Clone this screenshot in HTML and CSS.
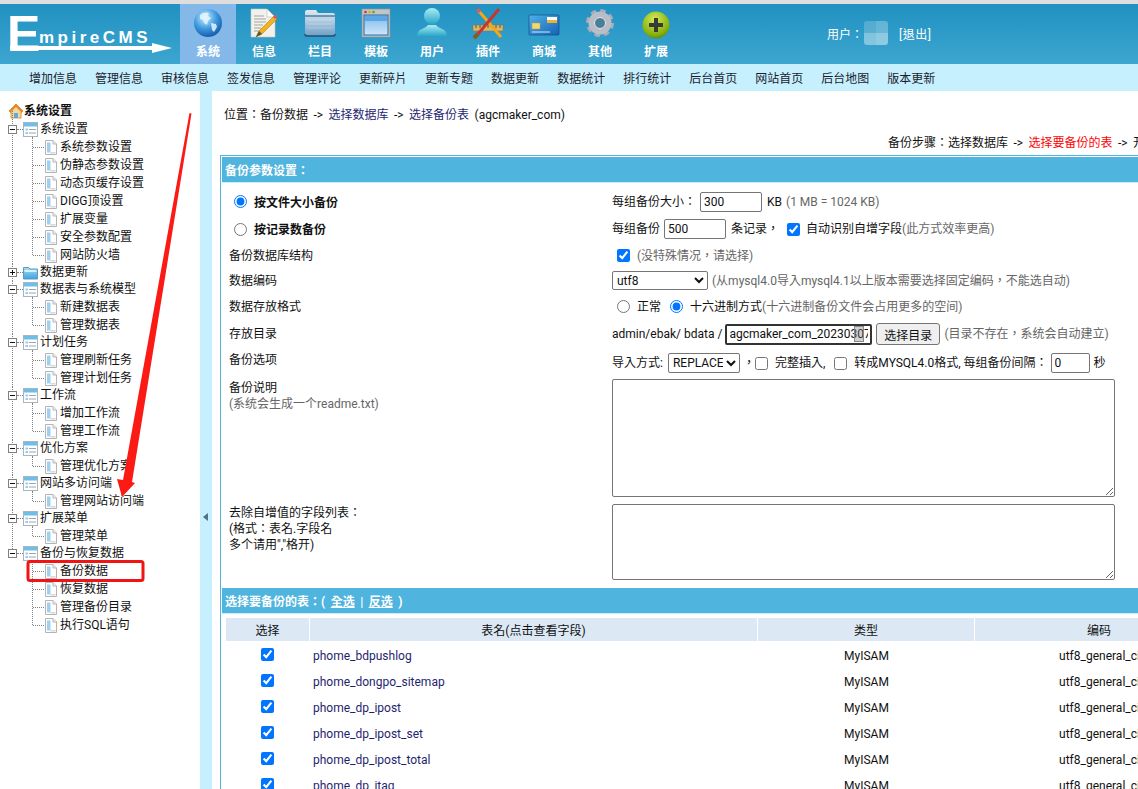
FILE: index.html
```html
<!DOCTYPE html>
<html>
<head>
<meta charset="utf-8">
<title>EmpireCMS</title>
<link rel="stylesheet" href="styles.css">
</head>
<body>
<svg class="defs" aria-hidden="true">
  <defs>
    <radialGradient id="gGlobe" cx=".4" cy=".3" r=".8"><stop offset="0" stop-color="#cfeeff"/><stop offset=".5" stop-color="#3f9be0"/><stop offset="1" stop-color="#0b4a9c"/></radialGradient>
    <linearGradient id="gFolder" x1="0" y1="0" x2="0" y2="1"><stop offset="0" stop-color="#dfeaf2"/><stop offset="1" stop-color="#6f9fc6"/></linearGradient>
    <linearGradient id="gWin" x1="0" y1="0" x2="0" y2="1"><stop offset="0" stop-color="#7db9ec"/><stop offset="1" stop-color="#cfe6fa"/></linearGradient>
    <linearGradient id="gUser" x1="0" y1="0" x2="0" y2="1"><stop offset="0" stop-color="#a8ecf5"/><stop offset="1" stop-color="#2ba6c9"/></linearGradient>
    <linearGradient id="gCard" x1="0" y1="0" x2="1" y2="1"><stop offset="0" stop-color="#4db2ea"/><stop offset="1" stop-color="#1562b4"/></linearGradient>
    <radialGradient id="gPlus" cx=".45" cy=".3" r=".8"><stop offset="0" stop-color="#d6ea5a"/><stop offset=".7" stop-color="#86b010"/><stop offset="1" stop-color="#4f7a04"/></radialGradient>
    <linearGradient id="gTreeF" x1="0" y1="0" x2="0" y2="1"><stop offset="0" stop-color="#a9dcf5"/><stop offset="1" stop-color="#3fa2dc"/></linearGradient>
    <symbol id="ic-panel" viewBox="0 0 15 15">
      <rect x=".5" y=".5" width="14" height="14" fill="#fff" stroke="#a9b4bc"/>
      <rect x="1" y="1" width="13" height="3.5" fill="#6dbfe9"/>
      <rect x="2.5" y="6.5" width="2.5" height="2" fill="#9cc9e8"/>
      <rect x="2.5" y="10" width="2.5" height="2" fill="#9cc9e8"/>
      <rect x="6" y="7" width="7" height="1" fill="#9aa7b2"/>
      <rect x="6" y="10.500" width="7" height="1" fill="#9aa7b2"/>
    </symbol>
    <symbol id="ic-dir" viewBox="0 0 15 15">
      <path d="M.5 2.500h5l1.500 1.500h7.500v10h-14z" fill="url(#gTreeF)" stroke="#5b9cc4"/>
      <rect x="1.500" y="5" width="12" height="2" fill="#d6f0fc"/>
    </symbol>
    <symbol id="ic-page" viewBox="0 0 12 15">
      <path d="M.5 .5h7.500l3.500 3.500v10.500h-11z" fill="#fff" stroke="#b4b4b4"/>
      <path d="M8 .5v3.500h3.500" fill="#eee" stroke="#b4b4b4"/>
      <rect x="2" y="2.500" width="3.500" height="10" fill="#9fd0ee"/>
      <rect x="5.500" y="12" width="5" height="1.500" fill="#d8d8d8"/>
    </symbol>
    <symbol id="ic-minus" viewBox="0 0 9 9">
      <rect x=".5" y=".5" width="8" height="8" fill="#fff" stroke="#808080"/>
      <rect x="2" y="4" width="5" height="1" fill="#111"/>
    </symbol>
    <symbol id="ic-plus" viewBox="0 0 9 9">
      <rect x=".5" y=".5" width="8" height="8" fill="#fff" stroke="#808080"/>
      <rect x="2" y="4" width="5" height="1" fill="#111"/>
      <rect x="4" y="2" width="1" height="5" fill="#111"/>
    </symbol>
  </defs>
</svg>

<div class="app">
  <header class="topbar">
    <svg class="logo" width="180" height="60" viewBox="0 0 180 60" role="img" aria-label="EmpireCMS">
      <text class="logo-e" x="7" y="47">E</text>
      <text class="logo-t" x="39" y="39">mpireCMS</text>
      <path d="M10 42h142v4h-142z" fill="#fff"/>
      <path d="M152 39l20 5-20 5z" fill="#fff"/>
    </svg>
    <nav class="mainnav">
      <a class="navitem active">
        <svg class="navicon" viewBox="0 0 34 34"><circle cx="17" cy="16" r="14" fill="url(#gGlobe)"/><path d="M9 8c3-3 7-3 9-2l-1 3 3 2-3 3-1 4-3-2-1-3-3-1zM20 16l5 1 1 3-3 5-2-2z" fill="#e6f6ff" opacity=".85"/></svg>
        <span class="navlabel">系统</span>
      </a>
      <a class="navitem">
        <svg class="navicon" viewBox="0 0 34 34"><path d="M4 2h16l8 8v20H4z" fill="#f2f1ec" stroke="#c8c8c0" stroke-width=".6"/><path d="M20 2v8h8z" fill="#fff" stroke="#bbb" stroke-width=".6"/><path d="M7 9h10M7 12h12M7 15h12M7 18h9M7 21h7M7 24h5" stroke="#a5a5a0"/><path d="M9 30l3-6 15-15 3 3-15 15z" fill="#f2b31e" stroke="#a86f00" stroke-width=".5"/><path d="M26 10l2-2c1-1 3 1 2 2l-2 2z" fill="#d8566a"/><path d="M9 30l3-6 3 3z" fill="#553"/></svg>
        <span class="navlabel">信息</span>
      </a>
      <a class="navitem">
        <svg class="navicon" viewBox="0 0 34 34"><path d="M2 5q0-2 2-2h9l2 3h15q2 0 2 2v19q0 2-2 2H4q-2 0-2-2z" fill="url(#gFolder)"/><path d="M2 9h30" stroke="#1f4f78"/><path d="M2 27q0 2 2 2h26q2 0 2-2" fill="none" stroke="#1f4f78" stroke-width="1.500"/><path d="M4 13h26M4 17h26M4 21h26" stroke="#fff" opacity=".25"/></svg>
        <span class="navlabel">栏目</span>
      </a>
      <a class="navitem">
        <svg class="navicon" viewBox="0 0 34 34"><rect x="3" y="2" width="28" height="28" fill="#c4c4c0" stroke="#8e9496" stroke-width=".6"/><circle cx="6.500" cy="5" r="1.300" fill="#d8322a"/><circle cx="10.500" cy="5" r="1.300" fill="#eaa21a"/><circle cx="14.500" cy="5" r="1.300" fill="#5aa82a"/><rect x="5" y="8" width="24" height="20" fill="url(#gWin)" stroke="#2c6aa4"/><rect x="6" y="9" width="22" height="5" fill="#5aa6e6"/></svg>
        <span class="navlabel">模板</span>
      </a>
      <a class="navitem">
        <svg class="navicon" viewBox="0 0 34 34"><circle cx="17" cy="9" r="8" fill="url(#gUser)"/><path d="M2 29c0-8 9-7 11-11h8c2 4 11 3 11 11z" fill="url(#gUser)"/></svg>
        <span class="navlabel">用户</span>
      </a>
      <a class="navitem">
        <svg class="navicon" viewBox="0 0 34 34"><rect x="2" y="18" width="30" height="6" fill="#d9b56a" stroke="#8f7030" stroke-width=".5"/><path d="M5 18v3M9 18v3M13 18v3M17 18v3M21 18v3M25 18v3M29 18v3" stroke="#6b5320"/><path d="M7 3l23 27" stroke="#f0a818" stroke-width="3"/><path d="M28 2L7 27" stroke="#c8362a" stroke-width="3"/><path d="M7 27l-4 4" stroke="#8a5a20" stroke-width="4"/><path d="M6 2l3 3" stroke="#d8566a" stroke-width="3"/></svg>
        <span class="navlabel">插件</span>
      </a>
      <a class="navitem">
        <svg class="navicon" viewBox="0 0 34 34"><rect x="2" y="8" width="30" height="20" rx="1" fill="url(#gCard)" stroke="#0e3f7e" stroke-width=".6"/><rect x="20" y="10" width="10" height="3" fill="#fff"/><rect x="20" y="13" width="10" height="3" fill="#f3b22c"/><rect x="5" y="16" width="8" height="6" fill="#f0d878" stroke="#c09a30" stroke-width=".5"/><path d="M5 25h18" stroke="#cfe6fa"/></svg>
        <span class="navlabel">商城</span>
      </a>
      <a class="navitem">
        <svg class="navicon" viewBox="0 0 34 34"><circle cx="17" cy="16" r="11.500" fill="none" stroke="#a9adb8" stroke-width="5" stroke-dasharray="5.020 4"/><circle cx="17" cy="16" r="8.500" fill="none" stroke="#b9bdc8" stroke-width="6"/><circle cx="17" cy="16" r="5.500" fill="#4b7f96" stroke="#e8e8ee"/></svg>
        <span class="navlabel">其他</span>
      </a>
      <a class="navitem">
        <svg class="navicon" viewBox="0 0 34 34"><circle cx="17" cy="18" r="13.500" fill="url(#gPlus)"/><path d="M15 11h4v5h5v4h-5v5h-4v-5h-5v-4h5z" fill="#3a3a30"/></svg>
        <span class="navlabel">扩展</span>
      </a>
    </nav>
    <div class="userbox">
      <span class="ut">用户：</span>
      <span class="avatar"></span>
      <a class="logout ut">[退出]</a>
    </div>
  </header>

  <nav class="subnav">
    <a>增加信息</a><a>管理信息</a><a>审核信息</a><a>签发信息</a><a>管理评论</a><a>更新碎片</a><a>更新专题</a><a>数据更新</a><a>数据统计</a><a>排行统计</a><a>后台首页</a><a>网站首页</a><a>后台地图</a><a>版本更新</a>
  </nav>

  <div class="workspace">
    <aside class="sidebar">
      <div class="root">
        <svg class="house" viewBox="0 0 16 16" width="16" height="16"><path d="M8 1L1 8l1.500 1.500L3 9v6h10V9l.5.5L15 8z" fill="#f3d9a0" stroke="#c8842a" stroke-width=".8"/><path d="M8 1L1 8l1.500 1.500L8 4l5.500 5.500L15 8z" fill="#e8862a"/><rect x="6" y="10" width="4" height="5" fill="#6aa6d8"/></svg>
        <strong>系统设置</strong>
      </div>
      <ul class="tree">
        <li class="folder first">
          <div class="row frow"><svg class="box"><use href="#ic-minus"/></svg><svg class="fico"><use href="#ic-panel"/></svg><span>系统设置</span></div>
          <ul class="leaves">
            <li class="row leaf"><svg class="pico"><use href="#ic-page"/></svg><span>系统参数设置</span></li>
            <li class="row leaf"><svg class="pico"><use href="#ic-page"/></svg><span>伪静态参数设置</span></li>
            <li class="row leaf"><svg class="pico"><use href="#ic-page"/></svg><span>动态页缓存设置</span></li>
            <li class="row leaf"><svg class="pico"><use href="#ic-page"/></svg><span>DIGG顶设置</span></li>
            <li class="row leaf"><svg class="pico"><use href="#ic-page"/></svg><span>扩展变量</span></li>
            <li class="row leaf"><svg class="pico"><use href="#ic-page"/></svg><span>安全参数配置</span></li>
            <li class="row leaf"><svg class="pico"><use href="#ic-page"/></svg><span>网站防火墙</span></li>
          </ul>
        </li>
        <li class="folder">
          <div class="row frow"><svg class="box"><use href="#ic-plus"/></svg><svg class="fico"><use href="#ic-dir"/></svg><span>数据更新</span></div>
        </li>
        <li class="folder">
          <div class="row frow"><svg class="box"><use href="#ic-minus"/></svg><svg class="fico"><use href="#ic-panel"/></svg><span>数据表与系统模型</span></div>
          <ul class="leaves">
            <li class="row leaf"><svg class="pico"><use href="#ic-page"/></svg><span>新建数据表</span></li>
            <li class="row leaf"><svg class="pico"><use href="#ic-page"/></svg><span>管理数据表</span></li>
          </ul>
        </li>
        <li class="folder">
          <div class="row frow"><svg class="box"><use href="#ic-minus"/></svg><svg class="fico"><use href="#ic-panel"/></svg><span>计划任务</span></div>
          <ul class="leaves">
            <li class="row leaf"><svg class="pico"><use href="#ic-page"/></svg><span>管理刷新任务</span></li>
            <li class="row leaf"><svg class="pico"><use href="#ic-page"/></svg><span>管理计划任务</span></li>
          </ul>
        </li>
        <li class="folder">
          <div class="row frow"><svg class="box"><use href="#ic-minus"/></svg><svg class="fico"><use href="#ic-panel"/></svg><span>工作流</span></div>
          <ul class="leaves">
            <li class="row leaf"><svg class="pico"><use href="#ic-page"/></svg><span>增加工作流</span></li>
            <li class="row leaf"><svg class="pico"><use href="#ic-page"/></svg><span>管理工作流</span></li>
          </ul>
        </li>
        <li class="folder">
          <div class="row frow"><svg class="box"><use href="#ic-minus"/></svg><svg class="fico"><use href="#ic-panel"/></svg><span>优化方案</span></div>
          <ul class="leaves">
            <li class="row leaf"><svg class="pico"><use href="#ic-page"/></svg><span>管理优化方案</span></li>
          </ul>
        </li>
        <li class="folder">
          <div class="row frow"><svg class="box"><use href="#ic-minus"/></svg><svg class="fico"><use href="#ic-panel"/></svg><span>网站多访问端</span></div>
          <ul class="leaves">
            <li class="row leaf"><svg class="pico"><use href="#ic-page"/></svg><span>管理网站访问端</span></li>
          </ul>
        </li>
        <li class="folder">
          <div class="row frow"><svg class="box"><use href="#ic-minus"/></svg><svg class="fico"><use href="#ic-panel"/></svg><span>扩展菜单</span></div>
          <ul class="leaves">
            <li class="row leaf"><svg class="pico"><use href="#ic-page"/></svg><span>管理菜单</span></li>
          </ul>
        </li>
        <li class="folder last">
          <div class="row frow"><svg class="box"><use href="#ic-minus"/></svg><svg class="fico"><use href="#ic-panel"/></svg><span>备份与恢复数据</span></div>
          <ul class="leaves">
            <li class="row leaf"><svg class="pico"><use href="#ic-page"/></svg><span>备份数据</span></li>
            <li class="row leaf"><svg class="pico"><use href="#ic-page"/></svg><span>恢复数据</span></li>
            <li class="row leaf"><svg class="pico"><use href="#ic-page"/></svg><span>管理备份目录</span></li>
            <li class="row leaf"><svg class="pico"><use href="#ic-page"/></svg><span>执行SQL语句</span></li>
          </ul>
        </li>
      </ul>
    </aside>
    <div class="splitter"><span class="collapse"></span></div>

    <main class="main">
      <div class="crumb">位置：备份数据 -&gt; <a>选择数据库</a> -&gt; <a>选择备份表</a> (agcmaker_com)</div>
      <div class="steps">备份步骤：选择数据库 -&gt; <span class="red">选择要备份的表</span> -&gt; 开始备份 -&gt; 备份完成</div>

      <section class="panel">
        <h2 class="panel-title">备份参数设置：</h2>
        <div class="form">
          <div class="frm r1">
            <label class="lab radio-lab"><input type="radio" name="mode" checked><b>按文件大小备份</b></label>
            <div class="fld">每组备份大小：<input class="ipt w62 ml4" value="300"><span class="ml5">KB</span> <span class="note ml4">(1 MB = 1024 KB)</span></div>
          </div>
          <div class="frm r2">
            <label class="lab radio-lab"><input type="radio" name="mode"><b>按记录数备份</b></label>
            <div class="fld">每组备份<input class="ipt w62 ml4" value="500"><span class="ml5">条记录，</span><input class="cb cb-a" type="checkbox" checked><span class="ml6">自动识别自增字段<span class="note">(此方式效率更高)</span></span></div>
          </div>
          <div class="frm r3">
            <div class="lab">备份数据库结构</div>
            <div class="fld"><input class="cb cb-b" type="checkbox" checked><span class="note ml7">(没特殊情况，请选择)</span></div>
          </div>
          <div class="frm r3">
            <div class="lab">数据编码</div>
            <div class="fld"><select class="sel w95"><option>utf8</option></select><span class="note ml4">(从mysql4.0导入mysql4.1以上版本需要选择固定编码，不能选自动)</span></div>
          </div>
          <div class="frm r5">
            <div class="lab">数据存放格式</div>
            <div class="fld"><input class="cb cb-b" type="radio" name="fmt"><span class="ml7">正常</span><input class="cb cb-c" type="radio" name="fmt" checked><span class="ml7">十六进制方式<span class="note">(十六进制备份文件会占用更多的空间)</span></span></div>
          </div>
          <div class="frm r6">
            <div class="lab">存放目录</div>
            <div class="fld">admin/ebak/ bdata /<span class="pathbox"><input class="ipt focused" value="agcmaker_com_20230307"><span class="mark"></span></span><button class="btn" type="button">选择目录</button><span class="note ml4">(目录不存在，系统会自动建立)</span></div>
          </div>
          <div class="frm r6 r7">
            <div class="lab up">备份选项</div>
            <div class="fld">导入方式:<select class="sel w72 ml5"><option>REPLACE</option></select><span class="ml3">，</span><input class="cb" type="checkbox"><span class="ml7">完整插入,</span><input class="cb cb-e" type="checkbox"><span class="ml7">转成MYSQL4.0格式, 每组备份间隔：</span><input class="ipt w39 ml3" value="0"><span class="ml4">秒</span></div>
          </div>
          <div class="frm r8">
            <div class="lab stack">备份说明<br><span class="note">(系统会生成一个readme.txt)</span></div>
            <div class="fld top"><textarea class="ta ta1"></textarea></div>
          </div>
          <div class="frm r9">
            <div class="lab stack s2">去除自增值的字段列表：<br>(格式：表名.字段名<br>多个请用","格开)</div>
            <div class="fld top"><textarea class="ta ta2"></textarea></div>
          </div>
        </div>
        <h2 class="panel-title second">选择要备份的表：( <a class="wl">全选</a> | <a class="wl">反选</a> )</h2>
        <table class="tbl">
          <thead><tr><th class="c1">选择</th><th class="c2">表名(点击查看字段)</th><th class="c3">类型</th><th class="c4">编码</th></tr></thead>
          <tbody>
            <tr><td class="ctr"><input class="cb" type="checkbox" checked></td><td class="name">phome_bdpushlog</td><td class="ctr">MyISAM</td><td class="ctr">utf8_general_ci</td></tr>
            <tr><td class="ctr"><input class="cb" type="checkbox" checked></td><td class="name">phome_dongpo_sitemap</td><td class="ctr">MyISAM</td><td class="ctr">utf8_general_ci</td></tr>
            <tr><td class="ctr"><input class="cb" type="checkbox" checked></td><td class="name">phome_dp_ipost</td><td class="ctr">MyISAM</td><td class="ctr">utf8_general_ci</td></tr>
            <tr><td class="ctr"><input class="cb" type="checkbox" checked></td><td class="name">phome_dp_ipost_set</td><td class="ctr">MyISAM</td><td class="ctr">utf8_general_ci</td></tr>
            <tr><td class="ctr"><input class="cb" type="checkbox" checked></td><td class="name">phome_dp_ipost_total</td><td class="ctr">MyISAM</td><td class="ctr">utf8_general_ci</td></tr>
            <tr><td class="ctr"><input class="cb" type="checkbox" checked></td><td class="name">phome_dp_itag</td><td class="ctr">MyISAM</td><td class="ctr">utf8_general_ci</td></tr>
          </tbody>
        </table>
      </section>
    </main>
  </div>

  <svg class="annot" viewBox="0 0 1138 789" aria-hidden="true">
    <path d="M189.500 113L191.500 113.500 132 482 135 483 122 497 117 479 123 480z" fill="#fb1a14"/>
    <rect x="28" y="561.500" width="115" height="19" rx="2" fill="none" stroke="#f01414" stroke-width="3"/>
  </svg>
</div>
</body>
</html>
```
FILE: styles.css
```css
* { box-sizing: border-box; }
html, body { margin: 0; height: 100%; overflow: hidden; background: #fff; }
body { font: 12px/18px Roboto, "Noto Sans CJK TC", sans-serif; color: #111; }
ul { list-style: none; margin: 0; padding: 0; }
.defs { position: absolute; width: 0; height: 0; }

.app { position: relative; width: 1138px; height: 789px; display: flex; flex-direction: column; border-top: 4px solid #dedede; overflow: hidden; }

/* header */
.topbar { flex: none; height: 60px; display: flex; background: linear-gradient(#2091c1, #3da6d0); }
.logo { flex: none; display: block; }
.logo-e { font: 700 50px "Liberation Sans", sans-serif; fill: #fff; }
.logo-t { font: 700 17px "Liberation Sans", sans-serif; letter-spacing: 3.500px; fill: #fff; }
.mainnav { display: flex; width: 504px; }
.navitem { width: 56px; flex: none; display: flex; flex-direction: column; align-items: center; padding-top: 3px; }
.navitem.active { background: #84b8e8; }
.navicon { width: 34px; height: 34px; display: block; flex: none; }
.navlabel { font-weight: 700; color: #fff; line-height: 18px; margin-top: 2px; }
.userbox { display: flex; align-items: center; height: 60px; margin-left: 143px; color: #fff; }
.ut { padding-top: 2px; }
.avatar { width: 24px; height: 24px; margin-left: 1px; margin-top: -2px; border-radius: 3px; background: linear-gradient(to right, rgba(255,255,255,.2) 50%, rgba(255,255,255,.28) 50%), linear-gradient(transparent 50%, rgba(255,255,255,.25) 50%); }
.logout { margin-left: 11px; letter-spacing: .5px; }

.subnav { flex: none; height: 27px; display: flex; align-items: center; gap: 18px; padding: 2px 0 0 29px; background: #c7f0ff; }
.subnav a { color: #1c1c2c; }

/* workspace */
.workspace { flex: 1; min-height: 0; display: flex; }
.sidebar { flex: none; width: 200px; padding-top: 11px; background: #fff; }
.splitter { flex: none; width: 12px; background: #c7f0ff; display: flex; align-items: center; justify-content: center; padding-right: 2px; }
.collapse { width: 0; height: 0; border: 4px solid transparent; border-left-width: 0; border-right: 5px solid #4e7286; margin-top: 153px; }

/* tree */
.root { height: 18px; display: flex; align-items: center; padding-left: 8px; }
.house { flex: none; }
.root strong { font-weight: 700; }
.folder { position: relative; margin-top: -1px; }
.folder.first { margin-top: 0; }
.folder::before { content: ""; position: absolute; left: 12px; top: 0; bottom: 0; border-left: 1px dotted #808080; }
.folder.first::before { top: -9px; }
.folder.last::before { bottom: auto; height: 9px; }
.row { height: 18px; display: flex; align-items: center; position: relative; }
.frow { padding-left: 8px; }
.box { width: 9px; height: 9px; flex: none; position: relative; }
.frow::after { content: ""; position: absolute; left: 17px; width: 6px; top: 9px; border-top: 1px dotted #808080; }
.fico { width: 15px; height: 15px; flex: none; margin-left: 6px; margin-right: 2px; }
.leaves { position: relative; }
.leaves::before { content: ""; position: absolute; left: 32px; top: -1px; bottom: 9px; border-left: 1px dotted #808080; }
.leaf { padding-left: 45px; }
.leaf::before { content: ""; position: absolute; left: 33px; width: 11px; top: 9px; border-top: 1px dotted #808080; }
.pico { width: 12px; height: 15px; flex: none; margin-right: 3px; }

/* main */
.main { flex: 1; min-width: 0; overflow: hidden; padding-top: 15px; }
.crumb { padding-left: 12px; height: 18px; word-spacing: 2.500px; }
.crumb a { color: #1f1f70; }
.steps { margin-top: 10px; padding-left: 676px; height: 18px; white-space: nowrap; word-spacing: 2.500px; }
.red { color: #f00; }
.panel { margin: 3px 0 0 8px; width: 1100px; border: 1px solid #4fb4de; border-right: 0; padding: 1px 0 0 1px; }
.panel-title { margin: 0; height: 26px; border-bottom: 1px solid #c7f0ff; background: #4fb4de; color: #fff; font-size: 12px; font-weight: 700; line-height: 25px; padding: 2px 0 0 3px; }
.panel-title.second { word-spacing: 2.500px; }
.wl { color: #fff; text-decoration: underline; }
.form { padding-top: 5px; height: 405px; }
.frm { display: grid; grid-template-columns: 390px 1fr; align-items: center; }
.r1 { height: 27px; }
.r2 { height: 28px; }
.r3 { height: 25px; }
.r5 { height: 27px; }
.r6 { height: 28px; }
.r7 { padding-top: 2px; }
.r8 { height: 124px; }
.r9 { height: 83px; }
.lab { padding-left: 7px; white-space: nowrap; }
.up { margin-top: -7px; }
.radio-lab { display: flex; align-items: center; padding-left: 12px; }
.radio-lab input { margin: 0 7px 0 0; width: 13px; height: 13px; }
.radio-lab b { padding-top: 2px; }
.stack { align-self: start; line-height: 16px; padding-top: 4px; }
.s2 { padding-top: 5px; }
.note { color: #666; }
.fld { display: flex; align-items: center; white-space: nowrap; }
.fld.top { align-items: flex-start; align-self: start; padding-top: 3px; }
.s2 + .fld.top { padding-top: 4px; }
.ipt { height: 20px; font: 12px Roboto, "Noto Sans CJK TC", sans-serif; color: #111; border: 1px solid #767676; border-radius: 2px; padding: 1px 3px; background: #fff; }
.w62 { width: 62px; }
.w39 { width: 39px; }
.ml3 { margin-left: 3px; }
.ml4 { margin-left: 4px; }
.ml5 { margin-left: 5px; }
.ml6 { margin-left: 6px; }
.ml7 { margin-left: 7px; }
.cb { width: 13px; height: 13px; margin: 0; }
.cb-a { margin-left: 8px; }
.cb-b { margin-left: 5px; }
.cb-c { margin-left: 9px; }
.cb-e { margin-left: 9px; }
.sel { height: 19px; font: 12px Roboto, "Noto Sans CJK TC", sans-serif; border: 1px solid #767676; border-radius: 2px; background: #fff; color: #111; }
.w95 { width: 96px; }
.w72 { width: 72px; height: 20px; }
.pathbox { position: relative; margin-left: 3px; display: flex; }
.focused { width: 147px; height: 21px; border: 2px solid #333; padding: 1px 2px; }
.mark { position: absolute; left: 129px; top: 2px; width: 10px; height: 16px; border: 1px solid #888; background: rgba(120,120,120,.35); }
.btn { height: 22px; width: 64px; margin-left: 4px; padding: 0; font: 12px Roboto, "Noto Sans CJK TC", sans-serif; color: #111; background: #efefef; border: 1px solid #767676; border-radius: 3px; }
.ta { display: block; width: 503px; border: 1px solid #767676; border-radius: 2px; background: #fff; }
.ta1 { height: 118px; }
.ta2 { height: 76px; }
.tbl { margin: 4px 0 0 4px; width: 998px; table-layout: fixed; border-collapse: separate; border-spacing: 0; }
.tbl th { height: 24px; font-weight: 400; background: #dce9f5; border-right: 1px solid #fff; border-bottom: 1px solid #fff; padding: 2px 0 0; background-clip: padding-box; }
.c1 { width: 84px; }
.c2 { width: 448px; }
.c3 { width: 217px; }
.c4 { width: 249px; }
.tbl td { height: 26px; padding: 2px 0 0; }
.ctr { text-align: center; }
.tbl td.name { padding-left: 3px; color: #1f1f70; }
.ctr .cb { display: block; margin: 0 auto; position: relative; top: -2px; left: -1px; }

/* annotations drawn over the page */
.annot { position: absolute; left: 0; top: -4px; width: 1138px; height: 789px; pointer-events: none; }
```
